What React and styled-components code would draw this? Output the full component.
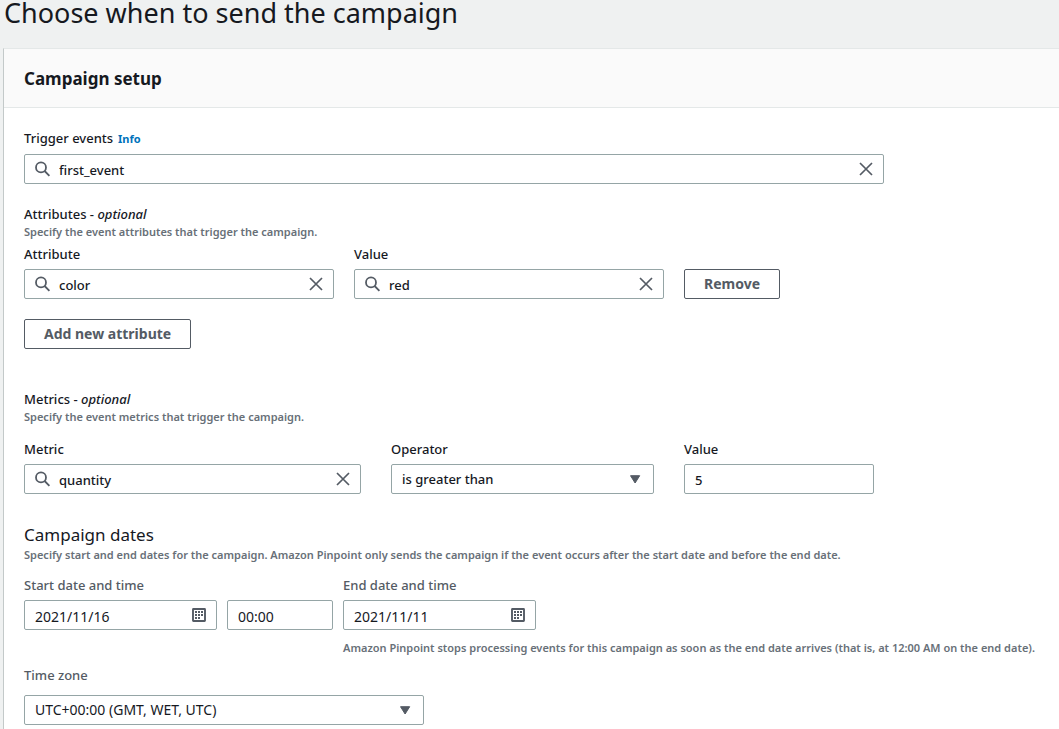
import React from "react";
import styled, { createGlobalStyle, css } from "styled-components";

const GlobalStyle = createGlobalStyle`
  *, *::before, *::after { box-sizing: border-box; }
  body {
    margin: 0;
    background: #eff1f1;
    color: #16191f;
    font-family: "Noto Sans", "Open Sans", sans-serif;
    font-size: 13px;
    font-weight: 500;
    line-height: 20px;
  }
  input, select, button { font: inherit; color: inherit; }
`;

const Page = styled.main`
  display: flex;
  flex-direction: column;
  min-height: 100vh;
  padding-left: 3px;
`;

const PageTitle = styled.h1`
  margin: 0 0 22px;
  padding-left: 1px;
  font-size: 27px;
  font-weight: 400;
  line-height: 26px;
`;

const Panel = styled.section`
  flex: 1;
  background: #ffffff;
  border-left: 1px solid #c3c9c9;
  border-top: 1px solid #e4e8e8;
`;

const PanelHeader = styled.header`
  padding: 18px 20px 16px;
  background: #fafafa;
  border-bottom: 1px solid #e4e8e8;
`;

const PanelTitle = styled.h2`
  margin: 0;
  font-size: 17px;
  font-weight: 700;
  line-height: 24px;
`;

const PanelBody = styled.form`
  padding: 20px 8px 4px 20px;
`;

const Group = styled.section`
  margin-top: ${(p) => p.$space}px;
`;

const GroupTitle = styled.h3`
  margin: 0;
  font-size: 13px;
  font-weight: 500;
  line-height: 20px;
`;

const DatesTitle = styled.h3`
  margin: 0;
  font-size: 17px;
  font-weight: 400;
  line-height: 24px;
`;

const Description = styled.p`
  margin: 0;
  color: #687078;
  font-size: 11px;
  font-weight: 600;
  line-height: 16px;
`;

const Row = styled.div`
  display: grid;
  grid-template-columns: ${(p) => p.$columns};
  column-gap: ${(p) => p.$gap}px;
  align-items: ${(p) => p.$align || "end"};
  margin-top: ${(p) => p.$space}px;
`;

const Field = styled.div`
  display: flex;
  flex-direction: column;
  gap: ${(p) => p.$gap || 5}px;
  max-width: ${(p) => (p.$max ? p.$max + "px" : "none")};
`;

const Label = styled.label`
  color: ${(p) => (p.$muted ? "#545b64" : "#16191f")};
`;

const LabelLine = styled.div`
  display: flex;
  align-items: baseline;
  gap: 5px;
`;

const InfoLink = styled.a`
  color: #0073bb;
  font-size: 11px;
  font-weight: 700;
  text-decoration: none;
`;

const Control = styled.div`
  display: flex;
  align-items: center;
  height: 30px;
  padding: 0 10px;
  gap: 8px;
  background: #ffffff;
  border: 1px solid #95a5a6;
  border-radius: 2px;
  max-width: ${(p) => (p.$max ? p.$max + "px" : "none")};
`;

const TextInput = styled.input`
  flex: 1;
  min-width: 0;
  width: 100%;
  height: 28px;
  padding: 2px 0 0;
  border: 0;
  outline: 0;
  background: transparent;
  ${(p) => p.$large && css`font-size: 14px; font-weight: 400;`}
`;

const IconButton = styled.button`
  display: flex;
  flex: none;
  padding: 0;
  border: 0;
  background: transparent;
  cursor: pointer;
`;

const SelectBox = styled.div`
  display: grid;
  align-items: center;
  & > * { grid-area: 1 / 1; }
  & > svg { justify-self: end; margin-right: 13px; pointer-events: none; }
`;

const Select = styled.select`
  appearance: none;
  width: 100%;
  height: 30px;
  padding: 0 30px 0 10px;
  background: #ffffff;
  border: 1px solid #95a5a6;
  border-radius: 2px;
  ${(p) => p.$large && css`font-size: 14px; font-weight: 400;`}
`;

const Button = styled.button`
  justify-self: start;
  height: 30px;
  padding: 0 19px;
  background: #ffffff;
  border: 1px solid #545b64;
  border-radius: 2px;
  color: #545b64;
  font-size: 14px;
  font-weight: 700;
  line-height: 20px;
  white-space: nowrap;
  cursor: pointer;
  ${(p) => p.$spaced && css`margin-top: 20px;`}
`;

const SearchIcon = () => (
  <svg width="16" height="16" viewBox="0 0 16 16" fill="none" stroke="#545b64" strokeWidth="1.8" aria-hidden="true">
    <circle cx="6" cy="6.4" r="5" />
    <path d="M9.6 10L14.4 14.8" />
  </svg>
);

const CloseIcon = () => (
  <svg width="14" height="14" viewBox="0 0 14 14" fill="none" stroke="#545b64" strokeWidth="1.7" aria-hidden="true">
    <path d="M1 1L13 13M13 1L1 13" />
  </svg>
);

const CaretIcon = () => (
  <svg width="11" height="9" viewBox="0 0 11 9" aria-hidden="true">
    <path d="M0.5 0.7H9.7L5.1 8Z" fill="#545b64" stroke="#545b64" strokeLinejoin="round" />
  </svg>
);

const CalendarIcon = () => (
  <svg width="14" height="14" viewBox="0 0 14 14" aria-hidden="true">
    <rect x="1" y="1" width="12" height="12" rx="0.4" fill="none" stroke="#545b64" strokeWidth="1.9" />
    <path
      d="M3 3h2v2h-2zM6 3h2v2h-2zM9 3h2v2h-2zM3 6h2v2h-2zM6 6h2v2h-2zM9 6h2v2h-2zM3 9h2v2h-2zM6 9h2v2h-2z"
      fill="#545b64"
    />
  </svg>
);

function SearchField({ id, value }) {
  return (
    <Control>
      <SearchIcon />
      <TextInput id={id} type="text" defaultValue={value} />
      <IconButton type="button" aria-label="Clear">
        <CloseIcon />
      </IconButton>
    </Control>
  );
}

function DateField({ id, value, max }) {
  return (
    <Control $max={max}>
      <TextInput $large id={id} type="text" defaultValue={value} />
      <IconButton type="button" aria-label="Open calendar">
        <CalendarIcon />
      </IconButton>
    </Control>
  );
}

function SelectField({ id, value, large }) {
  return (
    <SelectBox>
      <Select $large={large} id={id} defaultValue={value}>
        <option>{value}</option>
      </Select>
      <CaretIcon />
    </SelectBox>
  );
}

export default function App() {
  return (
    <>
      <GlobalStyle />
      <Page>
        <PageTitle>Choose when to send the campaign</PageTitle>
        <Panel>
          <PanelHeader>
            <PanelTitle>Campaign setup</PanelTitle>
          </PanelHeader>
          <PanelBody>
            <Field $max={860}>
              <LabelLine>
                <Label htmlFor="trigger">Trigger events</Label>
                <InfoLink href="#info">Info</InfoLink>
              </LabelLine>
              <SearchField id="trigger" value="first_event" />
            </Field>

            <Group $space={20}>
              <GroupTitle>
                Attributes - <em>optional</em>
              </GroupTitle>
              <Description>Specify the event attributes that trigger the campaign.</Description>
              <Row $columns="minmax(0, 310px) minmax(0, 310px) auto" $gap={20} $space={4}>
                <Field>
                  <Label htmlFor="attribute">Attribute</Label>
                  <SearchField id="attribute" value="color" />
                </Field>
                <Field>
                  <Label htmlFor="attribute-value">Value</Label>
                  <SearchField id="attribute-value" value="red" />
                </Field>
                <Button type="button">Remove</Button>
              </Row>
              <Button type="button" $spaced>
                Add new attribute
              </Button>
            </Group>

            <Group $space={40}>
              <GroupTitle>
                Metrics - <em>optional</em>
              </GroupTitle>
              <Description>Specify the event metrics that trigger the campaign.</Description>
              <Row $columns="minmax(0, 337px) minmax(0, 263px) minmax(0, 190px)" $gap={30} $space={14}>
                <Field>
                  <Label htmlFor="metric">Metric</Label>
                  <SearchField id="metric" value="quantity" />
                </Field>
                <Field>
                  <Label htmlFor="operator">Operator</Label>
                  <SelectField id="operator" value="is greater than" />
                </Field>
                <Field>
                  <Label htmlFor="metric-value">Value</Label>
                  <Control>
                    <TextInput id="metric-value" type="text" defaultValue="5" />
                  </Control>
                </Field>
              </Row>
            </Group>

            <Group $space={29}>
              <DatesTitle>Campaign dates</DatesTitle>
              <Description>
                Specify start and end dates for the campaign. Amazon Pinpoint only sends the campaign if the event
                occurs after the start date and before the end date.
              </Description>
              <Row $columns="309px minmax(0, 1fr)" $gap={10} $space={12} $align="start">
                <Field>
                  <Label $muted htmlFor="start-date">Start date and time</Label>
                  <Row $columns="193px 106px" $gap={10} $space={0}>
                    <DateField id="start-date" value="2021/11/16" />
                    <Control>
                      <TextInput $large aria-label="Start time" type="text" defaultValue="00:00" />
                    </Control>
                  </Row>
                </Field>
                <Field>
                  <Label $muted htmlFor="end-date">End date and time</Label>
                  <DateField id="end-date" value="2021/11/11" max={193} />
                  <Group as="div" $space={5}>
                    <Description>
                      Amazon Pinpoint stops processing events for this campaign as soon as the end date arrives (that
                      is, at 12:00 AM on the end date).
                    </Description>
                  </Group>
                </Field>
              </Row>
            </Group>

            <Group $space={9}>
              <Field $gap={10} $max={400}>
                <Label $muted htmlFor="time-zone">Time zone</Label>
                <SelectField large id="time-zone" value="UTC+00:00 (GMT, WET, UTC)" />
              </Field>
            </Group>
          </PanelBody>
        </Panel>
      </Page>
    </>
  );
}
